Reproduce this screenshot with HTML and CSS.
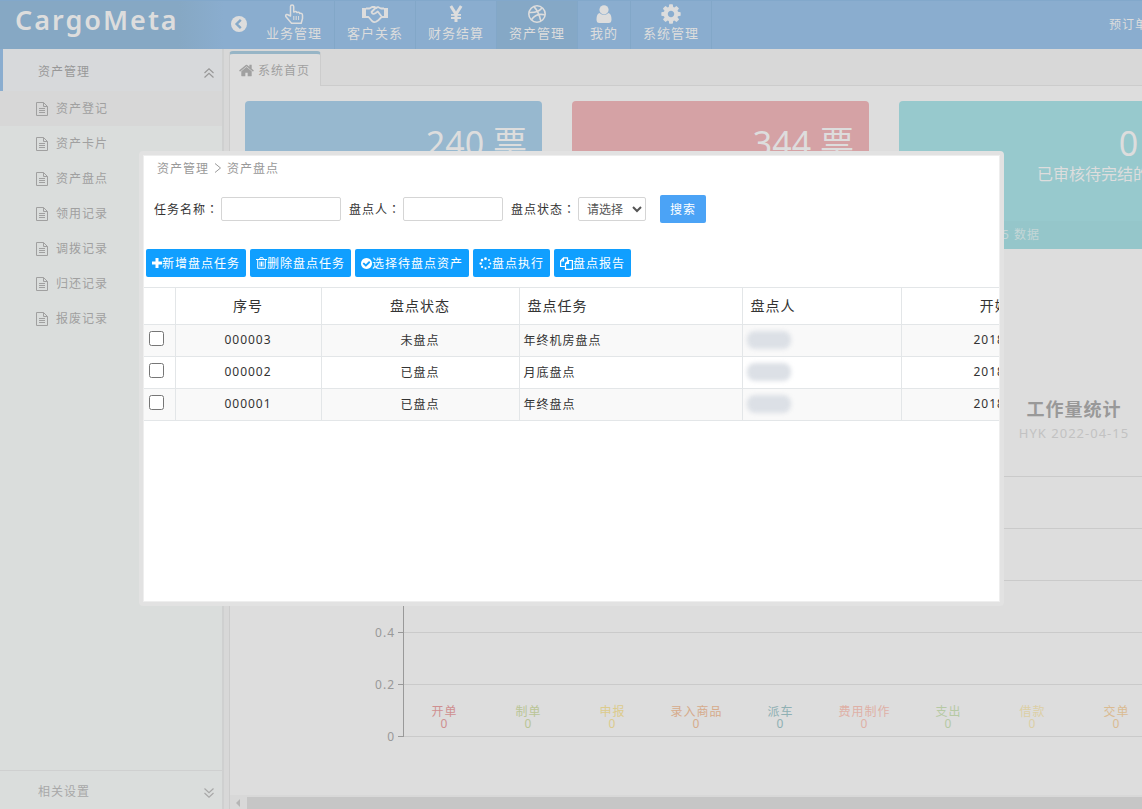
FILE: index.html
```html
<!DOCTYPE html>
<html lang="zh-CN">
<head>
    <meta charset="UTF-8">
    <meta name="viewport" content="width=device-width, initial-scale=1.0">
    <title>CargoMeta</title>
    <link rel="stylesheet" href="styles.css">
</head>
<body>
    <svg class="sprite" aria-hidden="true">
        <symbol id="i-file" viewBox="0 0 12 14">
            <path d="M.5 .5h7l4 4v9h-11zM7.5 .5v4h4M3 6.500h6M3 8.500h6M3 10.500h6" fill="none" stroke="currentColor"/>
        </symbol>
        <symbol id="i-up" viewBox="0 0 10 10">
            <path d="M.5 5L5 .8 9.500 5M.5 9.500L5 5.300 9.500 9.500" fill="none" stroke="currentColor" stroke-width="1.200"/>
        </symbol>
        <symbol id="i-down" viewBox="0 0 10 10">
            <path d="M.5 .5L5 4.700 9.500 .5M.5 5L5 9.200 9.500 5" fill="none" stroke="currentColor" stroke-width="1.200"/>
        </symbol>
    </svg>

    <header class="topbar">
        <div class="logo">CargoMeta</div>
        <button class="collapse" aria-label="收起菜单">
            <svg width="16" height="16" viewBox="0 0 16 16"><circle cx="8" cy="8" r="8" fill="currentColor"/><path d="M9.800 3.800L5.600 8l4.200 4.200" fill="none" stroke="#85a9c9" stroke-width="2.400"/></svg>
        </button>
        <nav class="nav">
            <a href="#">
                <svg width="20" height="20" viewBox="0 0 20 20" fill="none" stroke="currentColor" stroke-width="1.500" stroke-linejoin="round"><path d="M6.500 12V2.500a1.600 1.600 0 0 1 3.200 0V8q2.700-1.400 3.200.6 2.200-1 2.800.8 2.800-.6 2.800 1.800v3.300l-1.300 4.700H7.500L2 12.800q-.9-1.700.6-2.300 1.200-.3 2.100.8z"/><path d="M9.800 12v4M12.200 12v4M14.600 12v4" stroke-width="1"/></svg>
                <span>业务管理</span>
            </a>
            <a href="#">
                <svg width="26" height="20" viewBox="0 0 26 20" fill="none" stroke="currentColor" stroke-width="1.800" stroke-linejoin="round"><path d="M4 4.500h3.500L10 3h2.500l1 .8L16 3l3 1.500h3M4 13h2.500l3.500 4q2 1.800 4 .8l2-1.200 3.500-3.600H22M13.500 4L9.500 8q1 3.200 4.500.8L15.800 7.500l4 5.200M13.500 4h2"/><path d="M0 4h4v10H0zM22 4h4v10h-4z" fill="currentColor" stroke="none"/></svg>
                <span>客户关系</span>
            </a>
            <a href="#">
                <svg width="20" height="20" viewBox="0 0 20 20" fill="none" stroke="currentColor"><path d="M4.800 2L10 10.200 15.200 2M10 10v8" stroke-width="3"/><path d="M5 10.800h10M5 14h10" stroke-width="1.800"/></svg>
                <span>财务结算</span>
            </a>
            <a href="#" class="active">
                <svg width="20" height="20" viewBox="0 0 20 20" fill="none" stroke="currentColor" stroke-width="1.600"><circle cx="10" cy="10" r="8.200"/><path d="M7 2.600Q12 8 13.800 17M2.200 8.500Q11 9 15 4M4.500 15.700Q9 8.800 17.800 10.800"/></svg>
                <span>资产管理</span>
            </a>
            <a href="#">
                <svg width="20" height="20" viewBox="0 0 20 20" fill="currentColor"><circle cx="10" cy="5.800" r="4.600"/><path d="M5.500 9q4.500 3.800 9 0 3 .8 3 6.500 0 3.500-2.800 3.500H5.300q-2.800 0-2.800-3.500Q2.500 9.800 5.500 9z"/></svg>
                <span>我的</span>
            </a>
            <a href="#">
                <svg width="22" height="20" viewBox="100 100 1592 1592" fill="currentColor"><path d="M1152 896q0-106-75-181t-181-75-181 75-75 181 75 181 181 75 181-75 75-181zm512-109v222q0 12-8 23t-20 13l-185 28q-19 54-39 91 35 50 107 138 10 12 10 25t-9 23q-27 37-99 108t-94 71q-12 0-26-9l-138-108q-44 23-91 38-16 136-29 186-7 28-36 28h-222q-14 0-24.500-8.500t-11.500-21.500l-28-184q-49-16-90-37l-141 107q-10 9-25 9-14 0-25-11-126-114-165-168-7-10-7-23 0-12 8-23 15-21 51-66.500t54-70.500q-27-50-41-99l-183-27q-13-2-21-12.500t-8-23.500v-222q0-12 8-23t19-13l186-28q14-46 39-92-40-57-107-138-10-12-10-24 0-10 9-23 26-36 98.500-107.500t94.500-71.500q13 0 26 10l138 107q44-23 91-38 16-136 29-186 7-28 36-28h222q14 0 24.500 8.500t11.500 21.500l28 184q49 16 90 37l142-107q9-9 24-9 13 0 25 10 129 119 165 170 7 8 7 22 0 12-8 23-15 21-51 66.500t-54 70.500q26 50 41 98l183 28q13 2 21 12.500t8 23.500z"/></svg>
                <span>系统管理</span>
            </a>
        </nav>
        <a href="#" class="top-link">预订单</a>
    </header>

    <div class="layout">
        <aside class="sidebar">
            <button class="group open">资产管理<svg width="10" height="10"><use href="#i-up"/></svg></button>
            <ul class="menu">
                <li><a href="#" class="active"><svg width="12" height="14"><use href="#i-file"/></svg>资产登记</a></li>
                <li><a href="#"><svg width="12" height="14"><use href="#i-file"/></svg>资产卡片</a></li>
                <li><a href="#"><svg width="12" height="14"><use href="#i-file"/></svg>资产盘点</a></li>
                <li><a href="#"><svg width="12" height="14"><use href="#i-file"/></svg>领用记录</a></li>
                <li><a href="#"><svg width="12" height="14"><use href="#i-file"/></svg>调拨记录</a></li>
                <li><a href="#"><svg width="12" height="14"><use href="#i-file"/></svg>归还记录</a></li>
                <li><a href="#"><svg width="12" height="14"><use href="#i-file"/></svg>报废记录</a></li>
            </ul>
            <button class="group settings">相关设置<svg width="10" height="10"><use href="#i-down"/></svg></button>
        </aside>

        <main class="main">
            <div class="tabs">
                <a href="#" class="tab">
                    <svg width="15" height="15" viewBox="64 128 1664 1536" fill="currentColor"><path d="M1472 992v480q0 26-19 45t-45 19h-384v-384h-256v384h-384q-26 0-45-19t-19-45v-480q0-1 .5-3t.5-3l575-474 575 474q1 2 1 6zm223-69l-62 74q-8 9-21 11h-3q-13 0-21-7l-692-577-692 577q-12 8-24 7-13-2-21-11l-62-74q-8-10-7-23.500t11-21.500l719-599q32-26 76-26t76 26l244 204v-195q0-14 9-23t23-9h192q14 0 23 9t9 23v408l219 182q10 8 11 21.500t-7 23.500z"/></svg>
                    系统首页
                </a>
            </div>
            <div class="content">
                <div class="dashboard">
                    <div class="cards">
                        <div class="card blue"><div class="count">240 票</div></div>
                        <div class="card red"><div class="count">344 票</div></div>
                        <div class="card teal">
                            <div class="count">0 票</div>
                            <div class="desc">已审核待完结的票数</div>
                            <div class="card-foot">HYK 2022-04-15 数据</div>
                        </div>
                    </div>
                    <section class="chart">
                        <h2>工作量统计</h2>
                        <p>HYK 2022-04-15</p>
                        <div class="chart-body">
                            <div class="axis">
                                <span>1</span>
                                <span>0.8</span>
                                <span>0.6</span>
                                <span>0.4</span>
                                <span>0.2</span>
                                <span>0</span>
                            </div>
                            <div class="plot">
                                <div class="band"></div>
                                <div class="band"></div>
                                <div class="band"></div>
                                <div class="band"></div>
                                <div class="band">
                                    <div class="bar c1">开单<br>0</div>
                                    <div class="bar c2">制单<br>0</div>
                                    <div class="bar c3">申报<br>0</div>
                                    <div class="bar c4">录入商品<br>0</div>
                                    <div class="bar c5">派车<br>0</div>
                                    <div class="bar c6">费用制作<br>0</div>
                                    <div class="bar c7">支出<br>0</div>
                                    <div class="bar c8">借款<br>0</div>
                                    <div class="bar c9">交单<br>0</div>
                                </div>
                            </div>
                        </div>
                    </section>
                </div>
            </div>
            <div class="scrollbar">
                <svg width="17" height="12" viewBox="0 0 17 12"><path d="M10 2v8L6 6z" fill="#b5b5b5"/></svg>
                <div class="thumb"></div>
            </div>
        </main>
    </div>

    <div class="dialog" role="dialog" aria-label="资产盘点">
        <div class="crumbs">
            <span>资产管理</span>
            <svg width="8" height="10" viewBox="0 0 8 10"><path d="M1 .5L6.500 5 1 9.500" fill="none" stroke="currentColor"/></svg>
            <span>资产盘点</span>
        </div>
        <form class="search">
            <label for="taskName">任务名称<span class="colon" lang="zh-TW">：</span></label>
            <input type="text" id="taskName" class="task-name">
            <label for="checker">盘点人<span class="colon" lang="zh-TW">：</span></label>
            <input type="text" id="checker" class="checker">
            <label for="status">盘点状态<span class="colon" lang="zh-TW">：</span></label>
            <select id="status">
                <option>请选择</option>
            </select>
            <button type="button" class="search-btn">搜索</button>
        </form>
        <div class="toolbar">
            <button><svg width="10" height="10" viewBox="0 0 10 10"><path d="M3.500 0h3v3.500H10v3H6.500V10h-3V6.500H0v-3h3.500z" fill="currentColor"/></svg>新增盘点任务</button>
            <button><svg width="11" height="12" viewBox="0 0 11 12" fill="none" stroke="currentColor"><path d="M0 2.500h11M3.500 2.500l.6-1.800h2.800l.6 1.800M1.700 2.500v8.800h7.600V2.500M4 4.500V9.500M5.500 4.500V9.500M7 4.500V9.500"/></svg>删除盘点任务</button>
            <button><svg width="11" height="11" viewBox="128 128 1536 1536"><path fill="currentColor" d="M1412 734q0-28-18-46l-91-90q-19-19-45-19t-45 19l-408 407-226-226q-19-19-45-19t-45 19l-91 90q-18 18-18 46 0 27 18 45l362 362q19 19 45 19 27 0 46-19l543-543q18-18 18-45zm252 162q0 209-103 385.500t-279.500 279.500-385.500 103-385.500-103-279.500-279.500-103-385.500 103-385.500 279.500-279.500 385.500-103 385.500 103 279.500 279.500 103 385.500z"/></svg>选择待盘点资产</button>
            <button><svg width="13" height="13" viewBox="0 0 13 13" fill="currentColor"><circle cx="6.500" cy="1.700" r="1.400"/><circle cx="10" cy="3.100" r="1"/><circle cx="11.300" cy="6.500" r="1"/><circle cx="10" cy="9.900" r="1"/><circle cx="6.500" cy="11.300" r="1.100"/><circle cx="3" cy="9.900" r="1.100"/><circle cx="1.700" cy="6.500" r="1.200"/><circle cx="3" cy="3.100" r="1.300"/></svg>盘点执行</button>
            <button><svg width="13" height="13" viewBox="0 0 13 13" fill="none" stroke="currentColor" stroke-width="1.200"><path d="M5 9.500H.6V4L3.500 .8H7.500V3.500M.5 4h3V.8M5.500 6.500l3-3h3.900v8.900H5.500zM5.500 6.500h3v-3"/></svg>盘点报告</button>
        </div>
        <div class="table-wrap">
            <table>
                <colgroup>
                    <col class="col-check"><col class="col-no"><col class="col-status"><col class="col-task"><col class="col-user"><col class="col-date">
                </colgroup>
                <thead>
                    <tr>
                        <th></th>
                        <th>序号</th>
                        <th>盘点状态</th>
                        <th class="left">盘点任务</th>
                        <th class="left">盘点人</th>
                        <th>开始时间</th>
                    </tr>
                </thead>
                <tbody>
                    <tr>
                        <td><input type="checkbox" aria-label="000003"></td>
                        <td>000003</td>
                        <td>未盘点</td>
                        <td class="left">年终机房盘点</td>
                        <td class="left"><span class="masked"></span></td>
                        <td>2018-12-28</td>
                    </tr>
                    <tr>
                        <td><input type="checkbox" aria-label="000002"></td>
                        <td>000002</td>
                        <td>已盘点</td>
                        <td class="left">月底盘点</td>
                        <td class="left"><span class="masked"></span></td>
                        <td>2018-12-28</td>
                    </tr>
                    <tr>
                        <td><input type="checkbox" aria-label="000001"></td>
                        <td>000001</td>
                        <td>已盘点</td>
                        <td class="left">年终盘点</td>
                        <td class="left"><span class="masked"></span></td>
                        <td>2018-12-28</td>
                    </tr>
                </tbody>
            </table>
        </div>
    </div>
</body>
</html>
```

FILE: styles.css
```css
* {
    box-sizing: border-box;
}

body {
    margin: 0;
    height: 100vh;
    display: flex;
    flex-direction: column;
    overflow: hidden;
    background-color: #dddddd;
    font-family: "Noto Sans", "Noto Sans CJK SC", sans-serif;
    font-size: 12px;
    letter-spacing: 1px;
    color: #333;
}

a {
    color: inherit;
    text-decoration: none;
}

button {
    font: inherit;
    letter-spacing: inherit;
    border: 0;
    padding: 0;
    cursor: pointer;
}

svg {
    flex-shrink: 0;
}

.sprite {
    position: absolute;
    width: 0;
    height: 0;
}

/* top bar */
.topbar {
    display: flex;
    flex-shrink: 0;
    height: 49px;
    overflow: hidden;
    background-color: #8aadcf;
    border-top: 1px solid #82a8cb;
    color: #dddddd;
}

.logo {
    width: 224px;
    flex-shrink: 0;
    padding-left: 15px;
    background: linear-gradient(90deg, #86a8c4 80%, #8aadcf);
    font-size: 27px;
    font-weight: 600;
    line-height: 38px;
    letter-spacing: 2px;
}

.collapse {
    width: 30px;
    flex-shrink: 0;
    display: flex;
    align-items: center;
    justify-content: center;
    padding-bottom: 2px;
    background: none;
    color: #dddddd;
}

.nav {
    display: flex;
    font-size: 13px;
}

.nav a {
    display: flex;
    flex-direction: column;
    align-items: center;
    padding: 3px 12px 0;
    border-right: 1px solid #82a7c8;
    line-height: 18px;
    white-space: nowrap;
}

.nav svg {
    height: 20px;
}

.nav a.active {
    background-color: #85a8c6;
}

.top-link {
    margin-left: auto;
    margin-right: -6px;
    flex-shrink: 0;
    line-height: 48px;
}

/* side menu */
.layout {
    flex: 1;
    display: flex;
    min-height: 0;
}

.sidebar {
    width: 224px;
    flex-shrink: 0;
    display: flex;
    flex-direction: column;
    background-color: #dadddc;
    border-right: 2px solid #cfd0d0;
    color: #a0a0a0;
}

.group {
    display: flex;
    align-items: center;
    justify-content: space-between;
    height: 42px;
    padding: 2px 8px 0 38px;
    background-color: #d7d9db;
    color: #989898;
}

.group.open {
    padding-left: 35px;
    border-left: 3px solid #8aadcf;
}

.group.settings {
    height: 39px;
    margin-top: auto;
    background-color: transparent;
    border-top: 1px solid #cfd0d0;
    color: #a8a8a8;
}

.group svg {
    margin-top: 3px;
}

.menu {
    list-style: none;
    margin: 0;
    padding: 0;
}

.menu a {
    display: flex;
    align-items: center;
    gap: 8px;
    height: 35px;
    padding: 0 0 2px 36px;
}

.menu svg {
    margin-top: 2px;
}

.menu a.active {
    background-color: #d7d7d7;
}

/* main area */
.main {
    flex: 1;
    min-width: 0;
    display: flex;
    flex-direction: column;
    padding-left: 5px;
    background-color: #d8d8d8;
}

.tabs {
    height: 37px;
    padding-top: 2px;
    border-bottom: 1px solid #cccccc;
}

.tab {
    display: flex;
    align-items: center;
    gap: 4px;
    width: 92px;
    height: 35px;
    padding-left: 9px;
    white-space: nowrap;
    background-color: #dddddd;
    border: 1px solid #cccccc;
    border-top: 3px solid #97b5c6;
    border-bottom: 0;
    border-radius: 4px 4px 0 0;
    color: #a0a0a0;
}

.content {
    flex: 1;
    min-height: 0;
    overflow: hidden;
    padding: 15px;
    background-color: #dddddd;
    border-left: 1px solid #cccccc;
}

.dashboard {
    min-width: 1658px;
}

.cards {
    display: flex;
    gap: 30px;
}

.card {
    flex: 0 0 297px;
    display: flex;
    flex-direction: column;
    height: 148px;
    padding-top: 20px;
    border-radius: 4px;
    color: #dddddd;
    letter-spacing: normal;
    text-align: right;
}

.card.blue {
    background-color: #97b8cf;
}

.card.red {
    background-color: #d5a2a5;
}

.card.teal {
    background-color: #97c9cd;
}

.count {
    padding-right: 15px;
    font-size: 34px;
    line-height: 44px;
}

.desc {
    padding-right: 15px;
    font-size: 16px;
    line-height: 18px;
}

.card-foot {
    margin-top: auto;
    padding-left: 8px;
    background-color: #95c6ca;
    border-radius: 0 0 4px 4px;
    letter-spacing: 1px;
    line-height: 28px;
    text-align: left;
    color: #c4d6d7;
}

/* chart */
.chart {
    margin-top: 146px;
    text-align: center;
}

.chart h2 {
    margin: 0;
    font-size: 18px;
    line-height: 28px;
    color: #999;
}

.chart p {
    margin: 0;
    font-size: 13px;
    line-height: 20px;
    color: #c2c2c2;
}

.chart-body {
    display: flex;
    margin-top: 7px;
}

.axis {
    width: 158px;
    color: #999;
}

.axis span {
    display: flex;
    align-items: center;
    justify-content: flex-end;
    gap: 3px;
    height: 52px;
}

.axis span::after {
    content: "";
    width: 5px;
    height: 1px;
    background-color: #999;
}

.plot {
    flex: 1;
    align-self: flex-start;
    margin-top: 26px;
    border-top: 1px solid #cacaca;
    border-left: 1px solid #999;
}

.band {
    display: flex;
    align-items: flex-end;
    height: 52px;
    padding-bottom: 6px;
    border-bottom: 1px solid #cacaca;
}

.bar {
    width: 84px;
    padding-right: 3px;
    line-height: 12px;
}

.c1 { color: #cf8f90; }
.c2 { color: #bac596; }
.c3 { color: #dccb8c; }
.c4 { color: #d6ab8b; }
.c5 { color: #8fb0b3; }
.c6 { color: #dfb0a6; }
.c7 { color: #b6c9a4; }
.c8 { color: #dccfa5; }
.c9 { color: #dabb92; }

.scrollbar {
    display: flex;
    align-items: center;
    height: 14px;
    padding-top: 2px;
    border-left: 1px solid #cccccc;
}

.thumb {
    flex: 1;
    height: 12px;
    background-color: #c6c6c6;
}

/* dialog */
.dialog {
    position: absolute;
    top: 151px;
    left: 139px;
    right: 138px;
    min-height: 455px;
    padding: 0 1px;
    background-color: #fff;
    border: 4px solid #e2e2e2;
    border-radius: 4px;
    box-shadow: inset 0 0 0 1px #eeeeee;
}

.crumbs {
    display: flex;
    align-items: center;
    gap: 5px;
    height: 26px;
    padding-left: 13px;
    color: #999;
}

.search {
    display: flex;
    align-items: center;
    height: 28px;
    margin-top: 14px;
    padding-left: 10px;
    white-space: nowrap;
}

.search label {
    margin-right: 2px;
}

.colon {
    font-family: "Noto Sans CJK TC", sans-serif;
}

.search input,
.search select {
    height: 24px;
    margin-right: 8px;
    padding: 0 4px;
    background-color: #fff;
    border: 1px solid #d5d5d5;
    border-radius: 2px;
    color: #555;
    font-family: inherit;
    font-size: 12px;
}

.search .task-name {
    width: 120px;
}

.search .checker {
    width: 100px;
}

.search select {
    width: 68px;
    margin-right: 14px;
}

.search-btn {
    width: 46px;
    height: 28px;
    background-color: #4ba3f6;
    border-radius: 2px;
    color: #fff;
}

.toolbar {
    display: flex;
    gap: 4px;
    margin-top: 26px;
    padding-left: 2px;
}

.toolbar button {
    display: flex;
    align-items: center;
    height: 28px;
    padding: 0 6px;
    background-color: #109fff;
    border-radius: 2px;
    color: #fff;
    white-space: nowrap;
}

.table-wrap {
    margin-top: 10px;
    overflow: hidden;
}

table {
    width: 976px;
    margin-left: -1px;
    table-layout: fixed;
    border-collapse: collapse;
}

.col-check { width: 32px; }
.col-no { width: 146px; }
.col-status { width: 198px; }
.col-task { width: 223px; }
.col-user { width: 159px; }

th,
td {
    height: 32px;
    padding: 0 4px 2px;
    border: 1px solid #e3e6e8;
    border-left: 0;
    text-align: center;
}

th {
    height: 37px;
    padding: 0 8px 2px;
    font-size: 14px;
    font-weight: normal;
}

.left {
    text-align: left;
}

tbody tr:nth-child(odd) {
    background-color: #f9f9f9;
}

td input {
    display: block;
    width: 15px;
    height: 15px;
    margin: 0 0 2px 2px;
}

.masked {
    display: block;
    width: 44px;
    height: 18px;
    border-radius: 8px;
    background-color: #dce0e6;
    filter: blur(2px);
}
```
